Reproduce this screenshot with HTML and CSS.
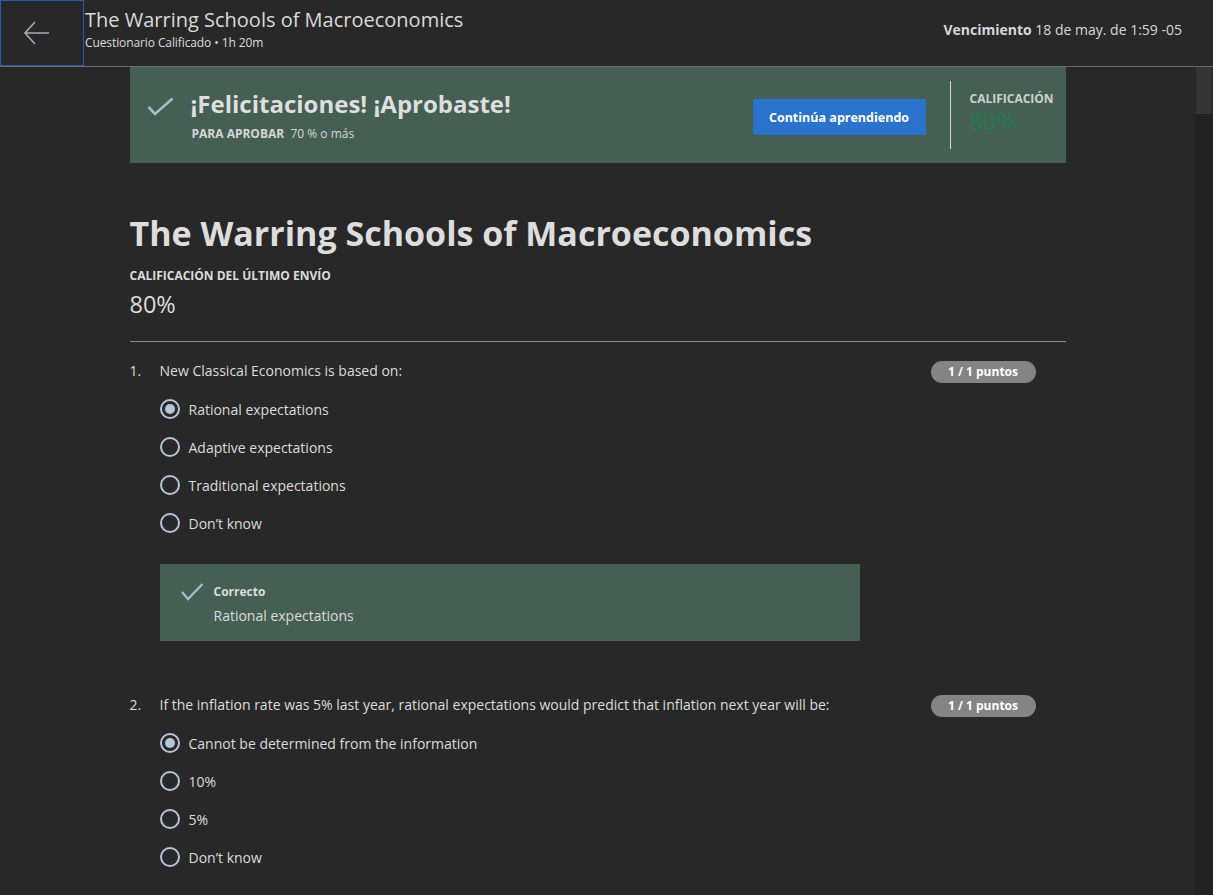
FILE: index.html
```html
<!DOCTYPE html>
<html lang="es">
<head>
<meta charset="utf-8">
<title>The Warring Schools of Macroeconomics</title>
<link rel="stylesheet" href="styles.css">
</head>
<body>
<header class="topbar">
  <a class="back" href="#" aria-label="Volver">
    <svg width="28" height="26" viewBox="0 0 28 26"><path d="M26 12 H2 M12 1 L2 12 L12 23" fill="none" stroke="#a3adbb" stroke-width="1.6"/></svg>
  </a>
  <div class="titles">
    <div class="title">The Warring Schools of Macroeconomics</div>
    <div class="subtitle">Cuestionario Calificado • 1h 20m</div>
  </div>
  <div class="due"><b>Vencimiento</b> 18 de may. de 1:59 -05</div>
</header>
<div class="body-row">
  <main class="content">
    <div class="page">
      <section class="banner">
        <div class="banner-left">
          <svg class="check" width="27" height="19" viewBox="0 0 27 19"><path d="M1.5 10 L8 17 L25.5 1.5" fill="none" stroke="#a9bbd2" stroke-width="2.6"/></svg>
          <div class="banner-text">
            <div class="congrats">¡Felicitaciones! ¡Aprobaste!</div>
            <div class="pass"><b>PARA APROBAR</b>&nbsp; 70 % o más</div>
          </div>
        </div>
        <button class="continue">Continúa aprendiendo</button>
        <div class="divider"></div>
        <div class="grade">
          <div class="grade-label">CALIFICACIÓN</div>
          <div class="grade-value">80%</div>
        </div>
      </section>

      <h1 class="heading">The Warring Schools of Macroeconomics</h1>
      <div class="last-label">CALIFICACIÓN DEL ÚLTIMO ENVÍO</div>
      <div class="last-value">80%</div>
      <hr class="rule">

      <section class="question">
        <div class="q-row">
          <span class="q-num">1.</span>
          <span class="q-text">New Classical Economics is based on:</span>
          <span class="pill">1 / 1 puntos</span>
        </div>
        <ul class="options">
          <li class="option"><span class="radio checked"></span>Rational expectations</li>
          <li class="option"><span class="radio"></span>Adaptive expectations</li>
          <li class="option"><span class="radio"></span>Traditional expectations</li>
          <li class="option"><span class="radio"></span>Don’t know</li>
        </ul>
        <div class="feedback">
          <svg class="fb-check" width="23" height="18" viewBox="0 0 23 18"><path d="M1 9 L7 16 L21.5 1" fill="none" stroke="#a9bbd2" stroke-width="2.2"/></svg>
          <div>
            <div class="fb-title">Correcto</div>
            <div class="fb-text">Rational expectations</div>
          </div>
        </div>
      </section>

      <section class="question">
        <div class="q-row">
          <span class="q-num">2.</span>
          <span class="q-text">If the inflation rate was 5% last year, rational expectations would predict that inflation next year will be:</span>
          <span class="pill">1 / 1 puntos</span>
        </div>
        <ul class="options">
          <li class="option"><span class="radio checked"></span>Cannot be determined from the information</li>
          <li class="option"><span class="radio"></span>10%</li>
          <li class="option"><span class="radio"></span>5%</li>
          <li class="option"><span class="radio"></span>Don’t know</li>
        </ul>
      </section>
    </div>
  </main>
  <div class="scrollbar"><div class="thumb"></div></div>
</div>
</body>
</html>
```

FILE: styles.css
```css
* { box-sizing: border-box; }
html, body { height: 100%; }
body {
  margin: 0;
  background: #282828;
  color: #dcdcdc;
  font-family: "Open Sans", "Noto Sans", "Liberation Sans", sans-serif;
  overflow: hidden;
  display: flex;
  flex-direction: column;
}

.topbar {
  height: 67px;
  flex: 0 0 67px;
  display: flex;
  align-items: flex-start;
  background: #282828;
  border-bottom: 1px solid #6b6b6b;
}
.back {
  width: 84px;
  height: 66px;
  border: 1px solid #1f5fae;
  display: flex;
  align-items: center;
  justify-content: center;
  padding-right: 10px;
  padding-top: 1px;
}
.titles {
  margin-left: 1px;
  padding-top: 6px;
  flex: 1;
}
.title {
  font-size: 20px;
  line-height: 28px;
  color: #dadada;
}
.subtitle {
  font-size: 12px;
  line-height: 16px;
  margin-top: 1px;
  color: #dcdcdc;
  letter-spacing: -0.1px;
}
.due {
  padding-top: 20px;
  padding-right: 31px;
  font-size: 14px;
  line-height: 20px;
  color: #d8d8d8;
}
.due b { font-weight: 700; }

.body-row {
  flex: 1;
  display: flex;
  min-height: 0;
}
.content {
  flex: 1;
  overflow: hidden;
}
.scrollbar {
  width: 18px;
  flex: 0 0 18px;
  background: #222222;
  border-left: 1px solid #262626;
}
.thumb {
  height: 47px;
  width: 16px;
  background: #353535;
}

.page {
  width: 936px;
  margin: 0 auto;
}

.banner {
  height: 96px;
  background: #455f53;
  display: flex;
  align-items: flex-start;
}
.banner-left {
  flex: 1;
  display: flex;
  align-items: flex-start;
  padding-left: 17px;
  margin-top: 21px;
}
.check {
  margin-top: 9px;
  margin-right: 17px;
}
.congrats {
  font-size: 24px;
  line-height: 32px;
  font-weight: 700;
  color: #dedede;
}
.pass {
  margin-top: 6px;
  padding-left: 1px;
  font-size: 12px;
  line-height: 16px;
  color: #d6d6d6;
}
.pass b { font-weight: 700; }
.continue {
  margin-top: 32px;
  width: 173px;
  height: 36px;
  border: 0;
  border-radius: 2px;
  background: #2a73cc;
  color: #ffffff;
  font-family: inherit;
  font-size: 12.5px;
  font-weight: 700;
  padding: 0;
}
.divider {
  margin-top: 14px;
  margin-left: 24px;
  width: 1px;
  height: 68px;
  background: #d8d8d8;
}
.grade {
  margin-top: 24px;
  margin-left: 19px;
  width: 96px;
}
.grade-label {
  font-size: 12px;
  line-height: 16px;
  font-weight: 700;
  color: #cfcfcf;
}
.grade-value {
  font-size: 24px;
  line-height: 28px;
  color: #1e7b4b;
}

.heading {
  margin: 46px 0 0;
  font-size: 34px;
  line-height: 48px;
  font-weight: 700;
  color: #dddddd;
}
.last-label {
  margin-top: 11px;
  font-size: 12px;
  line-height: 16px;
  font-weight: 700;
  color: #dcdcdc;
}
.last-value {
  margin-top: 5px;
  font-size: 23.5px;
  line-height: 30px;
  color: #dddddd;
}
.rule {
  margin: 22px 0 0;
  border: 0;
  height: 1px;
  background: #8a8a8a;
}

.question {
  margin-top: 17px;
  padding-bottom: 35px;
}
.question + .question { margin-top: 17px; }
.q-row {
  display: flex;
  align-items: flex-start;
  height: 22px;
  font-size: 14px;
  line-height: 22px;
}
.q-num {
  width: 29px;
  margin-top: 1px;
}
.q-text {
  flex: 1;
  margin-top: 1px;
  padding-left: 1px;
}
.pill {
  margin-top: 2px;
  margin-right: 30px;
  width: 105px;
  height: 22px;
  border-radius: 11px;
  background: #848484;
  color: #ffffff;
  font-size: 12px;
  font-weight: 700;
  line-height: 22px;
  text-align: center;
}
.options {
  list-style: none;
  margin: 9px 0 0;
  padding: 0 0 0 30px;
}
.option {
  height: 38px;
  display: flex;
  align-items: center;
  font-size: 14px;
  color: #dcdcdc;
}
.radio {
  width: 20px;
  height: 20px;
  border: 2px solid #b5c5db;
  border-radius: 50%;
  margin-right: 9px;
  display: flex;
  align-items: center;
  justify-content: center;
}
.radio.checked::after {
  content: "";
  width: 10px;
  height: 10px;
  border-radius: 50%;
  background: #b5c5db;
}
.feedback {
  margin: 22px 0 0 30px;
  width: 700px;
  height: 77px;
  background: #455f53;
  display: flex;
  align-items: flex-start;
  padding: 19px 0 0 21px;
}
.fb-check {
  margin-right: 10px;
}
.fb-title {
  margin-top: 1px;
  font-size: 12px;
  line-height: 16px;
  font-weight: 700;
  color: #dcdcdc;
}
.fb-text {
  margin-top: 6px;
  font-size: 14px;
  line-height: 20px;
  color: #dcdcdc;
}
```
